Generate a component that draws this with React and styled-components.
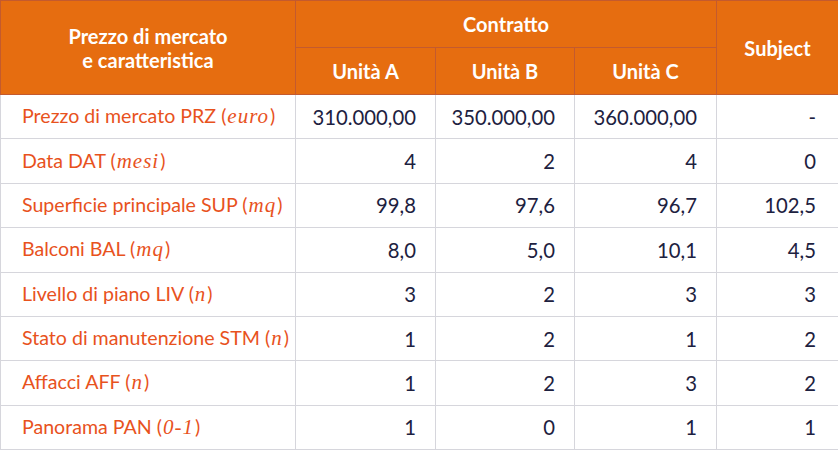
import React from "react";
import styled, { createGlobalStyle } from "styled-components";

const GlobalStyle = createGlobalStyle`
  html, body {
    margin: 0;
    padding: 0;
    background: #ffffff;
    font-family: Lato, "Open Sans", sans-serif;
  }
`;

const Table = styled.table`
  width: 838px;
  height: 450px;
  border-collapse: collapse;
  table-layout: fixed;
  font-family: Lato, sans-serif;
`;

const HeadCell = styled.th`
  background: #e66d10;
  color: #ffffff;
  font-weight: 700;
  font-size: 20px;
  line-height: 24px;
  text-align: center;
  border: 1px solid #c45a2e;
  padding: 0;
  height: 46px;
`;

const LabelCell = styled.td`
  color: #e8521d;
  font-size: 19.6px;
  font-weight: 400;
  text-align: left;
  padding: 0 0 0 21px;
  border: 1px solid #d6d6dc;
  white-space: nowrap;
`;

const Unit = styled.span`
  font-family: "Liberation Serif", "DejaVu Serif", serif;
  font-style: italic;
  font-size: 21px;
  letter-spacing: 1px;
  padding: 0 1px 0 1px;
`;

const ValueCell = styled.td`
  color: #1d2140;
  font-size: 20.3px;
  text-align: right;
  padding: 0 ${(p) => (p.$last ? 22 : 19)}px 0 0;
  border: 1px solid #d6d6dc;
`;

const rows = [
  ["Prezzo di mercato PRZ", "euro", ["310.000,00", "350.000,00", "360.000,00", "-"]],
  ["Data DAT", "mesi", ["4", "2", "4", "0"]],
  ["Superficie principale SUP", "mq", ["99,8", "97,6", "96,7", "102,5"]],
  ["Balconi BAL", "mq", ["8,0", "5,0", "10,1", "4,5"]],
  ["Livello di piano LIV", "n", ["3", "2", "3", "3"]],
  ["Stato di manutenzione STM", "n", ["1", "2", "1", "2"]],
  ["Affacci AFF", "n", ["1", "2", "3", "2"]],
  ["Panorama PAN", "0-1", ["1", "0", "1", "1"]],
];

export default function App() {
  return (
    <>
      <GlobalStyle />
      <Table>
        <colgroup>
          <col style={{ width: 295 }} />
          <col style={{ width: 140 }} />
          <col style={{ width: 139 }} />
          <col style={{ width: 142 }} />
          <col style={{ width: 122 }} />
        </colgroup>
        <thead>
          <tr>
            <HeadCell rowSpan={2}>
              Prezzo di mercato
              <br />e caratteristica
            </HeadCell>
            <HeadCell colSpan={3}>Contratto</HeadCell>
            <HeadCell rowSpan={2}>Subject</HeadCell>
          </tr>
          <tr>
            <HeadCell>Unità A</HeadCell>
            <HeadCell>Unità B</HeadCell>
            <HeadCell>Unità C</HeadCell>
          </tr>
        </thead>
        <tbody>
          {rows.map(([label, unit, values]) => (
            <tr key={label}>
              <LabelCell>
                {label} (<Unit>{unit}</Unit>)
              </LabelCell>
              {values.map((v, i) => (
                <ValueCell key={i} $last={i === 3}>
                  {v}
                </ValueCell>
              ))}
            </tr>
          ))}
        </tbody>
      </Table>
    </>
  );
}
